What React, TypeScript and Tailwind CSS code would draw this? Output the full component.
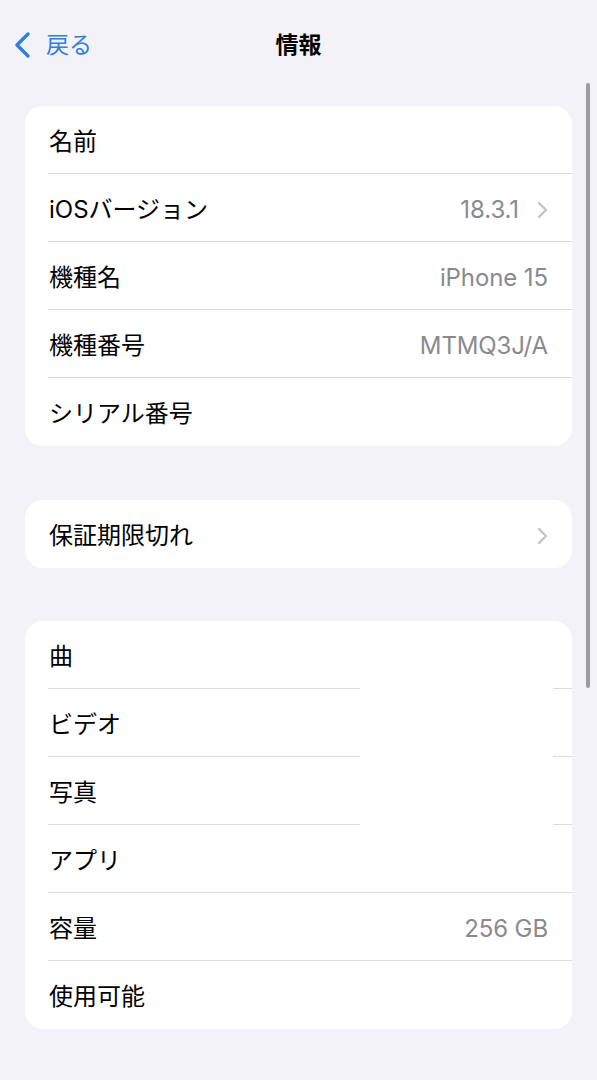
import React from 'react'

type Row = {
  label: string
  value?: string
  link?: boolean
}

const deviceRows: Row[] = [
  { label: '名前' },
  { label: 'iOSバージョン', value: '18.3.1', link: true },
  { label: '機種名', value: 'iPhone 15' },
  { label: '機種番号', value: 'MTMQ3J/A' },
  { label: 'シリアル番号' },
]

const warrantyRows: Row[] = [{ label: '保証期限切れ', link: true }]

const mediaRows: Row[] = [
  { label: '曲' },
  { label: 'ビデオ' },
  { label: '写真' },
  { label: 'アプリ' },
  { label: '容量', value: '256 GB' },
  { label: '使用可能' },
]

const Chevron = () => (
  <svg width="11" height="18" viewBox="0 0 11 18" fill="none" className="ml-[18px]">
    <path d="M2 2l7 7-7 7" stroke="#c4c4c7" strokeWidth="2.4" strokeLinecap="round" strokeLinejoin="round" />
  </svg>
)

const ListRow = ({ row, last }: { row: Row; last: boolean }) => (
  <div className="relative flex h-[68px] items-center pl-[24px] pr-[24px] pt-[3px]">
    <span className="text-[24px] text-black">{row.label}</span>
    <div className="ml-auto flex items-center">
      {row.value && <span className="text-[24px] tracking-[-0.1px] text-[#8a8a8e]">{row.value}</span>}
      {row.link && <Chevron />}
    </div>
    {!last && <div className="absolute bottom-0 left-[23px] right-0 h-px bg-[#dcdcdf]" />}
  </div>
)

const Group = ({ rows, children }: { rows: Row[]; children?: React.ReactNode }) => (
  <div className="relative mx-[25px] overflow-hidden rounded-[18px] bg-white">
    {rows.map((row, i) => (
      <ListRow key={row.label} row={row} last={i === rows.length - 1} />
    ))}
    {children}
  </div>
)

const App: React.FC = (): JSX.Element => {
  return (
    <main
      className="relative min-h-screen w-full bg-[#f2f2f7] pb-10"
      style={{ fontFamily: '"Inter", "Noto Sans CJK JP", sans-serif' }}
    >
      <header className="relative flex h-[90px] items-center justify-center">
        <button className="absolute left-[12px] top-[31px] flex items-center text-[#317fdc]">
          <svg width="22" height="28" viewBox="0 0 22 28" fill="none">
            <path d="M16 3L5 14l11 11" stroke="#317fdc" strokeWidth="3.4" strokeLinecap="round" strokeLinejoin="round" />
          </svg>
          <span className="ml-[12px] text-[23px] leading-none">戻る</span>
        </button>
        <h1 className="text-[23px] font-bold text-black">情報</h1>
      </header>

      <div className="mt-[16px] flex flex-col gap-[55px]">
        <Group rows={deviceRows} />
        <div className="-mt-[1px]">
          <Group rows={warrantyRows} />
        </div>
        <div className="-mt-[2px]">
          <Group rows={mediaRows}>
            {/* blank block sitting over the middle rows */}
            <div className="absolute left-[335px] top-[66px] h-[141px] w-[193px] bg-white" />
          </Group>
        </div>
      </div>

      {/* scroll indicator */}
      <div className="absolute left-[586px] top-[83px] h-[605px] w-[4px] rounded-full bg-[#9d9da1]" />
    </main>
  )
}

export default App
